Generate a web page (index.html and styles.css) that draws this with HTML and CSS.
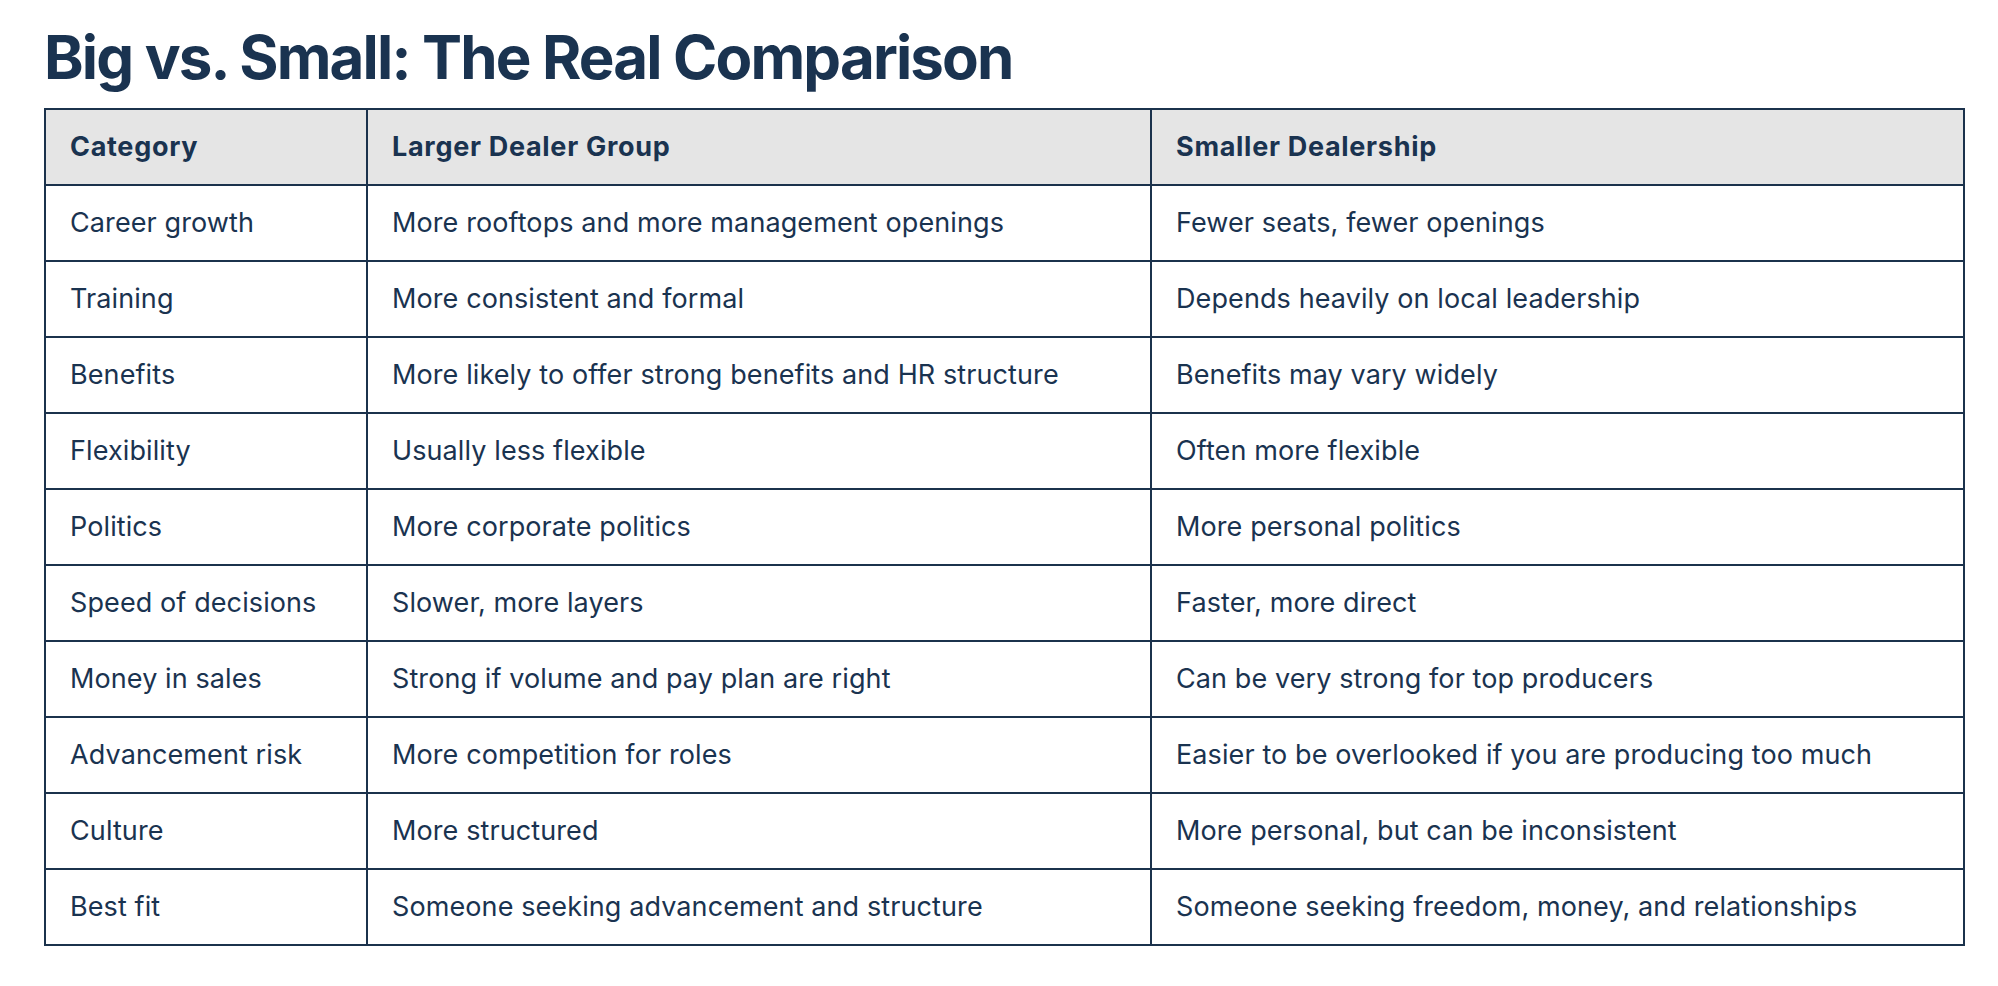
FILE: index.html
```html
<!DOCTYPE html>
<html lang="en">
<head>
<meta charset="utf-8">
<title>Big vs. Small: The Real Comparison</title>
<link rel="stylesheet" href="styles.css">
</head>
<body>
<main class="page">
  <h1 class="title">Big vs. Small: The Real Comparison</h1>
  <table class="compare">
    <colgroup>
      <col class="c1"><col class="c2"><col class="c3">
    </colgroup>
    <thead>
      <tr><th>Category</th><th>Larger Dealer Group</th><th>Smaller Dealership</th></tr>
    </thead>
    <tbody>
      <tr><td>Career growth</td><td>More rooftops and more management openings</td><td>Fewer seats, fewer openings</td></tr>
      <tr><td>Training</td><td>More consistent and formal</td><td>Depends heavily on local leadership</td></tr>
      <tr><td>Benefits</td><td>More likely to offer strong benefits and HR structure</td><td>Benefits may vary widely</td></tr>
      <tr><td>Flexibility</td><td>Usually less flexible</td><td>Often more flexible</td></tr>
      <tr><td>Politics</td><td>More corporate politics</td><td>More personal politics</td></tr>
      <tr><td>Speed of decisions</td><td>Slower, more layers</td><td>Faster, more direct</td></tr>
      <tr><td>Money in sales</td><td>Strong if volume and pay plan are right</td><td>Can be very strong for top producers</td></tr>
      <tr><td>Advancement risk</td><td>More competition for roles</td><td>Easier to be overlooked if you are producing too much</td></tr>
      <tr><td>Culture</td><td>More structured</td><td>More personal, but can be inconsistent</td></tr>
      <tr><td>Best fit</td><td>Someone seeking advancement and structure</td><td>Someone seeking freedom, money, and relationships</td></tr>
    </tbody>
  </table>
</main>
</body>
</html>
```

FILE: styles.css
```css
html, body {
  margin: 0;
  padding: 0;
  background: #ffffff;
}
body {
  font-family: Inter, "Noto Sans", "Liberation Sans", sans-serif;
  color: #1a3350;
}
.page {
  padding: 21px 35px 0 44px;
}
.title {
  margin: 0 0 15px 0;
  font-size: 60px;
  line-height: 72px;
  font-weight: 700;
  letter-spacing: -1.85px;
  color: #1a3350;
}
.compare {
  width: 1919px;
  border-collapse: collapse;
  table-layout: fixed;
  border: 2px solid #1b324c;
}
.c1 { width: 322px; }
.c2 { width: 784px; }
.c3 { width: 813px; }
.compare th,
.compare td {
  border: 2px solid #1b324c;
  padding: 17px 24px;
  line-height: 40px;
  font-size: 27px;
  text-align: left;
  white-space: nowrap;
}
.compare th {
  background: #e5e5e5;
  font-weight: 700;
  letter-spacing: 0.7px;
}
.compare td {
  font-weight: 400;
  letter-spacing: 0.1px;
}
```
